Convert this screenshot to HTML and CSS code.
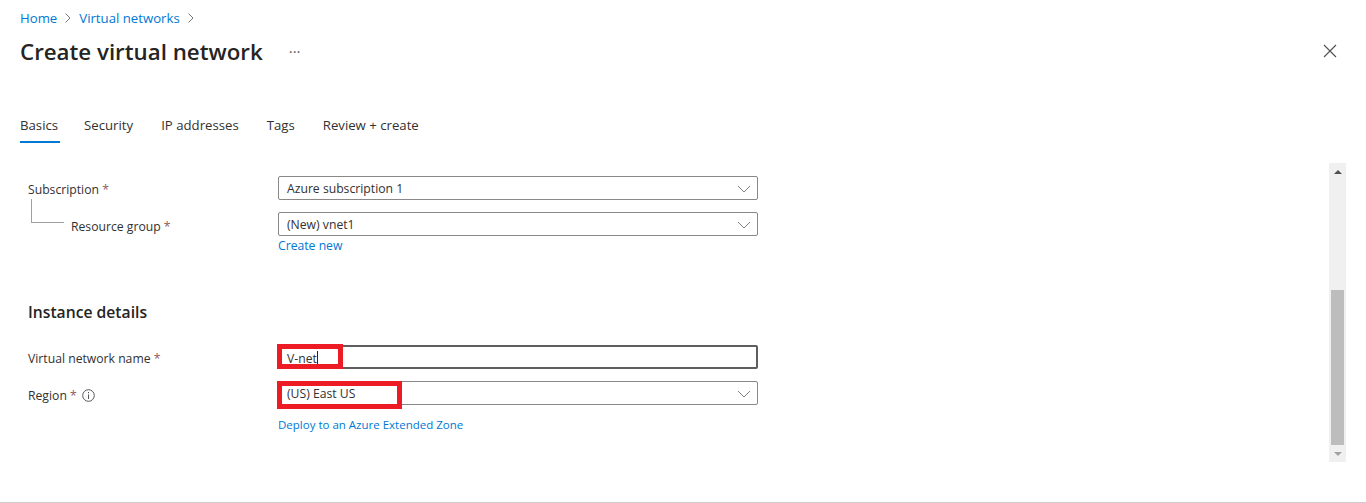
FILE: index.html
```html
<!DOCTYPE html>
<html lang="en">
<head>
    <meta charset="UTF-8">
    <title>Create virtual network</title>
    <link rel="stylesheet" href="styles.css">
</head>
<body>
    <div class="page">
        <nav class="breadcrumb">
            <a href="#">Home</a>
            <svg class="crumb-sep" width="8" height="10" viewBox="0 0 8 10"><path d="M1.5 .5 6 5 1.5 9.500" fill="none" stroke="#777" stroke-width="1"/></svg>
            <a href="#">Virtual networks</a>
            <svg class="crumb-sep" width="8" height="10" viewBox="0 0 8 10"><path d="M1.5 .5 6 5 1.500 9.500" fill="none" stroke="#777" stroke-width="1"/></svg>
        </nav>

        <header class="title-row">
            <h1>Create virtual network</h1>
            <span class="more">···</span>
            <svg class="close" width="14" height="14" viewBox="0 0 14 14"><path d="M1 1 13 13M13 1 1 13" fill="none" stroke="#505050" stroke-width="1.100"/></svg>
        </header>

        <div class="tabs">
            <a class="tab active" href="#">Basics</a>
            <a class="tab" href="#">Security</a>
            <a class="tab" href="#">IP addresses</a>
            <a class="tab" href="#">Tags</a>
            <a class="tab" href="#">Review + create</a>
        </div>

        <div class="content">
            <form class="form">
                <div class="row first">
                    <label>Subscription <span class="req">*</span></label>
                    <div class="select">Azure subscription 1<svg class="chevron" width="14" height="8" viewBox="0 0 14 8"><path d="M1 1 7 7 13 1" fill="none" stroke="#808080" stroke-width="1"/></svg></div>
                </div>
                <div class="row child">
                    <span class="tree"></span>
                    <label>Resource group <span class="req">*</span></label>
                    <div class="field-col">
                        <div class="select">(New) vnet1<svg class="chevron" width="14" height="8" viewBox="0 0 14 8"><path d="M1 1 7 7 13 1" fill="none" stroke="#808080" stroke-width="1"/></svg></div>
                        <a class="link create-new" href="#">Create new</a>
                    </div>
                </div>

                <h2>Instance details</h2>

                <div class="row">
                    <label>Virtual network name <span class="req">*</span></label>
                    <div class="input focused">V-net<span class="caret"></span><span class="mark mark-name"></span></div>
                </div>
                <div class="row region">
                    <label>Region <span class="req">*</span>
                        <svg class="info" width="13" height="13" viewBox="0 0 13 13"><circle cx="6.500" cy="6.500" r="5.800" fill="none" stroke="#555" stroke-width="1"/><path d="M6.500 5.500V10M6.500 3v1.300" stroke="#555" stroke-width="1"/></svg>
                    </label>
                    <div class="field-col">
                        <div class="select">(US) East US<svg class="chevron" width="14" height="8" viewBox="0 0 14 8"><path d="M1 1 7 7 13 1" fill="none" stroke="#808080" stroke-width="1"/></svg><span class="mark mark-region"></span></div>
                        <a class="link deploy" href="#">Deploy to an Azure Extended Zone</a>
                    </div>
                </div>
            </form>

            <div class="scrollbar">
                <span class="arrow up"></span>
                <div class="track"><div class="thumb"></div></div>
                <span class="arrow down"></span>
            </div>
        </div>
    </div>
</body>
</html>
```

FILE: styles.css
```css
* {
    box-sizing: border-box;
}

html, body {
    margin: 0;
    height: 503px;
    overflow: hidden;
}

body {
    font-family: "Open Sans", "Noto Sans", Arial, sans-serif;
    font-size: 12.200px;
    color: #323130;
    background: #fff;
}

.page {
    height: 503px;
    padding: 9px 20px 0;
    border-bottom: 1px solid #ccc;
}

a {
    text-decoration: none;
}

.breadcrumb {
    display: flex;
    align-items: center;
    gap: 7px;
    height: 17px;
    font-size: 13.200px;
}

.breadcrumb a,
.link {
    color: #0078d4;
}

.title-row {
    display: flex;
    align-items: center;
    height: 36px;
    margin-top: 7px;
}

h1 {
    margin: 0;
    font-size: 22.300px;
    font-weight: 600;
    color: #252423;
}

.more {
    margin-left: 26px;
    font-size: 15px;
    color: #605e5c;
}

.close {
    margin-left: auto;
    margin-right: 9px;
}

.tabs {
    display: flex;
    gap: 28px;
    height: 28px;
    margin-top: 46px;
    padding-top: 1px;
    font-size: 13.200px;
}

.tab {
    color: #323130;
    height: 27px;
    line-height: 19px;
}

.tab.active {
    padding-right: 2px;
    margin-right: -4px;
    border-bottom: 2px solid #0078d4;
}

.content {
    display: flex;
    justify-content: space-between;
    margin-top: 20px;
}

.form {
    width: 738px;
    padding-left: 8px;
    padding-top: 13px;
}

.row {
    display: flex;
    align-items: flex-start;
    position: relative;
}

.row label {
    width: 250px;
    height: 24px;
    line-height: 24px;
    padding-top: 2px;
    flex: none;
}

.req {
    color: #8f5b5b;
}

.row.child {
    margin-top: 12px;
}

.row.child label {
    padding-left: 43px;
    padding-top: 3px;
}

.tree {
    position: absolute;
    left: 3px;
    top: -13px;
    width: 33px;
    height: 24px;
    border-left: 1px solid #a0a0a0;
    border-bottom: 1px solid #a0a0a0;
}

.field-col {
    flex: 1;
}

.select,
.input {
    position: relative;
    width: 480px;
    height: 24px;
    line-height: 23px;
    padding-left: 8px;
    border: 1px solid #8a8886;
    border-radius: 2px;
    color: #323130;
}

.input.focused {
    border: 2px solid #605e5c;
    padding-left: 7px;
    line-height: 23px;
}

.chevron {
    position: absolute;
    right: 6px;
    top: 8px;
}

.caret {
    display: inline-block;
    width: 1px;
    height: 15px;
    background: #222;
    vertical-align: -3px;
}

.mark {
    position: absolute;
    border: 5px solid #ed1c24;
}

.mark-name {
    left: -3px;
    top: -3px;
    width: 66px;
    height: 25px;
}

.mark-region {
    left: -2px;
    top: -1px;
    width: 125px;
    height: 28px;
}

.create-new {
    display: block;
    margin-top: 1px;
    line-height: 17px;
}

h2 {
    margin: 48px 0 23px;
    font-size: 15.700px;
    font-weight: 600;
    line-height: 20px;
    color: #252423;
}

.row.region {
    margin-top: 12px;
}

.row.region label {
    padding-top: 3px;
}

.info {
    margin-left: 2px;
    vertical-align: -2px;
}

.deploy {
    display: block;
    margin-top: 11px;
    line-height: 17px;
    font-size: 11.500px;
}

.scrollbar {
    width: 17px;
    height: 299px;
    background: #f0f0f0;
    display: flex;
    flex-direction: column;
    align-items: center;
}

.arrow {
    flex: none;
    width: 0;
    height: 0;
    border-left: 4px solid transparent;
    border-right: 4px solid transparent;
}

.arrow.up {
    margin-top: 7px;
    border-bottom: 4px solid #505050;
}

.arrow.down {
    margin: 7px 0 6px;
    border-top: 4px solid #a3a3a3;
}

.track {
    flex: 1;
    width: 100%;
    padding: 0 2px;
    display: flex;
    flex-direction: column;
    justify-content: flex-end;
}

.thumb {
    height: 155px;
    background: #bdbdbd;
}
```
